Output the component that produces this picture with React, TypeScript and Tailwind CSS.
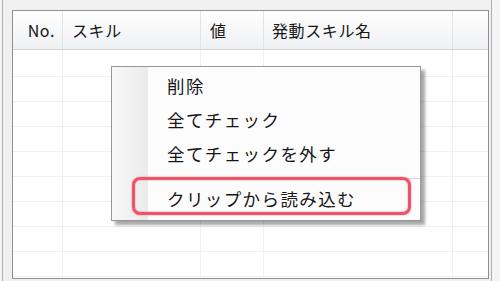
import React from "react";

const font = { fontFamily: '"Noto Sans CJK JP", "Noto Sans", sans-serif' };

const columns = [
  { label: "No.", cls: "w-[50px] justify-end pr-[7px]" },
  { label: "スキル", cls: "w-[138px] pl-[9px]" },
  { label: "値", cls: "w-[63px] pl-[9px]" },
  { label: "発動スキル名", cls: "w-[189px] pl-[8px]" },
  { label: "", cls: "flex-1" },
];

const bodyCols = ["w-[50px]", "w-[138px]", "w-[63px]", "w-[189px]", "flex-1"];

const rowHeights = ["h-[27px]", "h-[25px]", "h-[25px]", "h-[25px]", "h-[25px]", "h-[25px]", "h-[25px]", "h-[25px]", "h-[25px]", "h-[25px]"];

const menuItems = ["削除", "全てチェック", "全てチェックを外す"];

export default function App() {
  return (
    <div className="relative h-[281px] w-[500px] overflow-hidden bg-[#f4f4f4] pl-[2px] pr-[8px]" style={font}>
      {/* Window frame */}
      <div className="h-full border-x border-[#aeaeae] bg-[#f0f0f0] pl-[9px] pr-[2px] pt-[10px]">
        {/* List view */}
        <div className="h-[269px] overflow-hidden border border-[#8e8f92] bg-white">
          {/* Header */}
          <div className="flex h-[39px] border-b border-[#d5d5d5] bg-gradient-to-b from-white to-[#eff0f2]">
            {columns.map((c, i) => (
              <div
                key={i}
                className={`flex items-center ${i < 4 ? "border-r border-[#e2e3e5]" : ""} text-[16px] tracking-[0.6px] text-[#161616] ${c.cls}`}
              >
                {c.label}
              </div>
            ))}
          </div>

          {/* Rows */}
          {rowHeights.map((h, r) => (
            <div key={r} className={`flex ${h} border-b border-[#f0f0f0]`}>
              {bodyCols.map((w, i) => (
                <div key={i} className={`${w} ${i < 4 ? "border-r border-[#f0f0f0]" : ""}`} />
              ))}
            </div>
          ))}
        </div>
      </div>

      {/* Context menu */}
      <div className="absolute left-[111px] top-[66px] flex h-[155px] w-[310px] border border-[#979797] bg-[#fcfcfc] shadow-[4px_4px_3px_rgba(0,0,0,0.35)]">
        <div className="w-[36px] bg-gradient-to-r from-[#f7f7f7] to-[#ebebeb]" />
        <div className="flex flex-1 flex-col pt-[2px]">
          {menuItems.map((m) => (
            <div key={m} className="flex h-[34px] items-center pl-[19px] text-[17.5px] tracking-[1.4px] text-[#161616]">
              {m}
            </div>
          ))}
          <div className="mb-[3px] mt-[7px] h-px bg-[#d4d4d4]" />
          <div className="flex h-[34px] items-center pl-[19px] text-[17.5px] tracking-[1.4px] text-[#161616]">
            クリップから読み込む
          </div>
        </div>
      </div>

      {/* Highlight annotation */}
      <div className="absolute left-[132px] top-[177px] h-[38px] w-[279px] rounded-[8px] border-[3px] border-[#ec5467] shadow-[0_0_1.5px_rgba(230,60,82,0.8),inset_0_0_1.5px_rgba(230,60,82,0.8)]" />
    </div>
  );
}
